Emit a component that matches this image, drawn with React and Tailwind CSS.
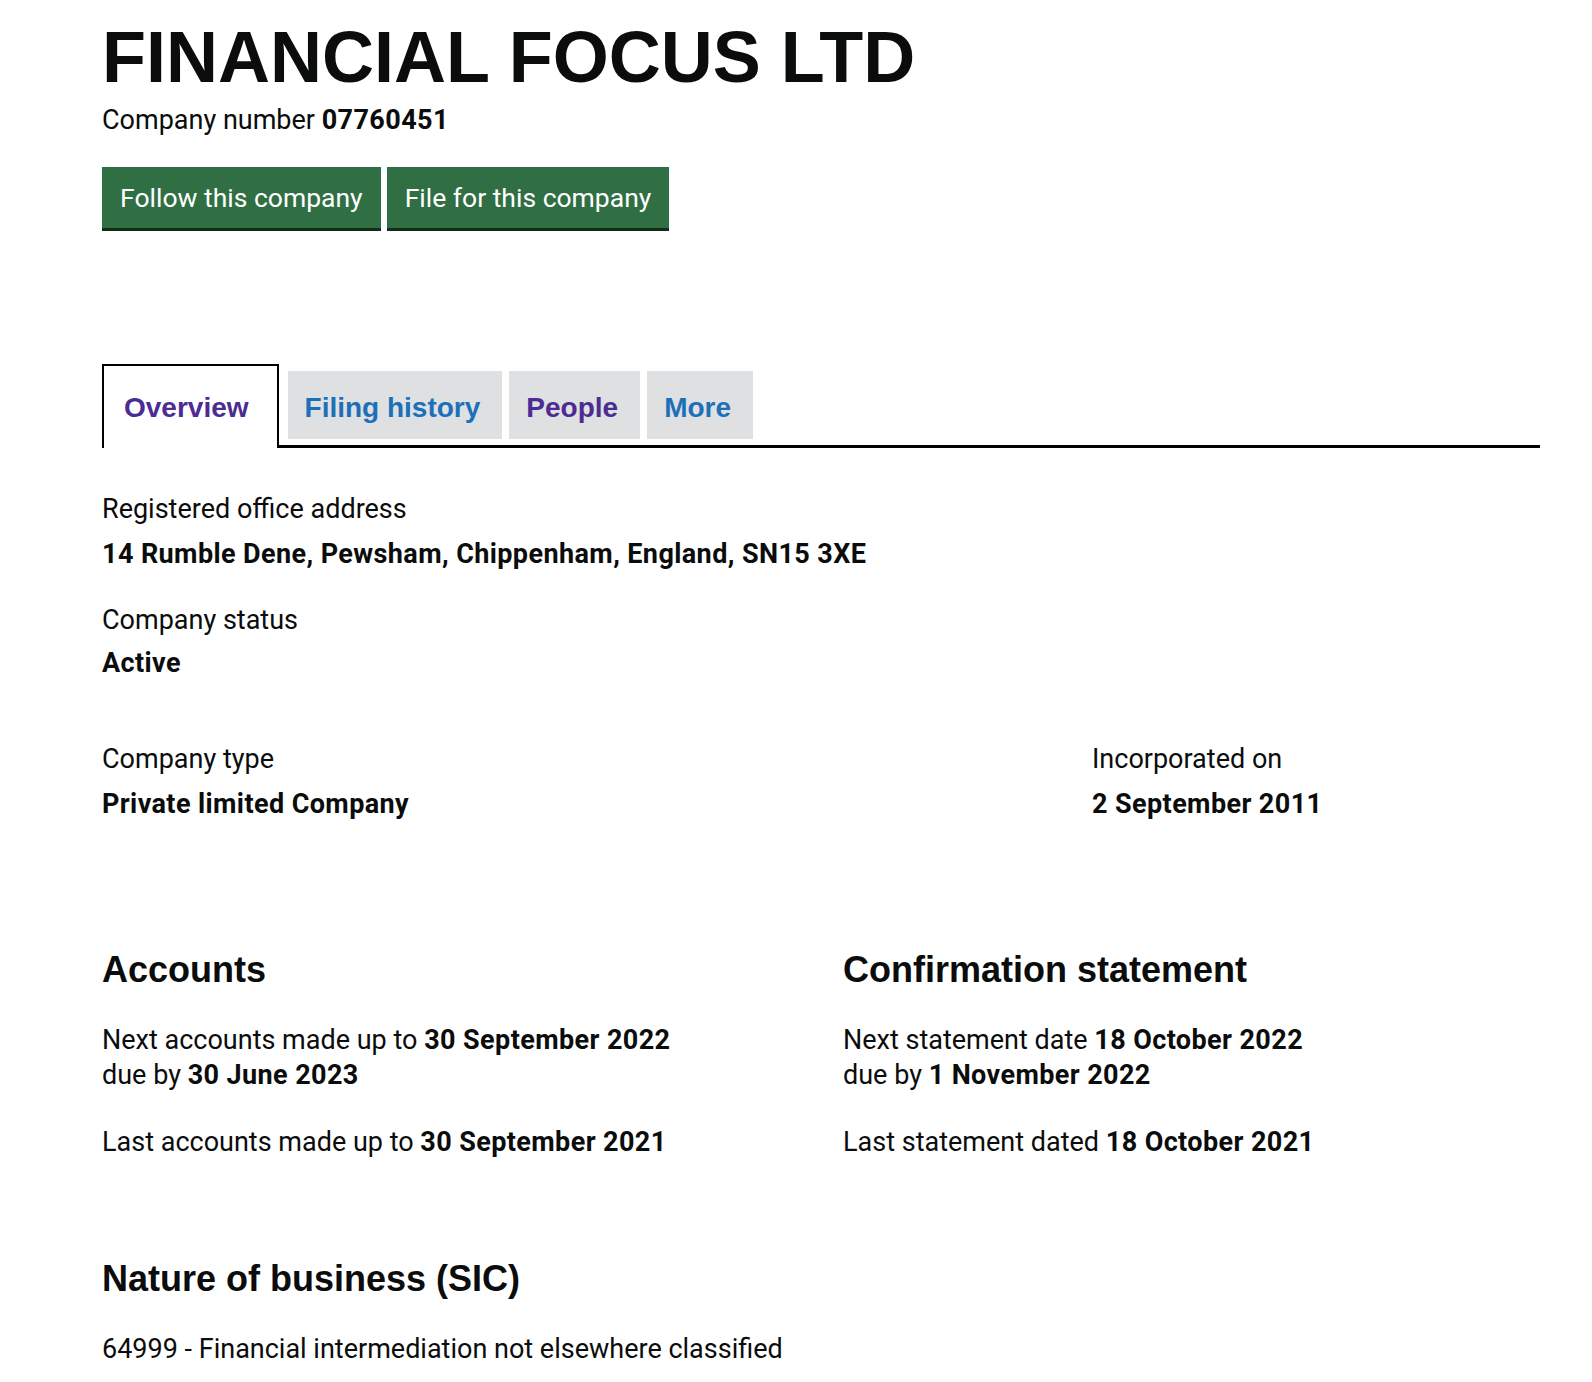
import React from "react";

const body = { fontFamily: "Roboto, 'Liberation Sans', Arial, sans-serif" };
const heading = { fontFamily: "'Liberation Sans', Arial, Helvetica, sans-serif" };

const tabs = [
  { label: "Overview", active: true, color: "text-[#4c2c92]" },
  { label: "Filing history", color: "text-[#1d70b8]" },
  { label: "People", color: "text-[#4c2c92]" },
  { label: "More", color: "text-[#1d70b8]" },
];

const Tabs = () => (
  <div className="flex items-end gap-[7px] border-b-[3px] border-black mt-[136px]" style={heading}>
    {tabs.map((t) =>
      t.active ? (
        <a
          key={t.label}
          href="#"
          className={`block bg-white border-t-2 border-x-2 border-black mb-[-3px] mr-[2px] pl-[20px] pr-[28px] pt-[28px] pb-[26px] text-[28px] leading-none font-bold ${t.color}`}
        >
          {t.label}
        </a>
      ) : (
        <a
          key={t.label}
          href="#"
          className={`block bg-[#dfe0e2] mb-[6px] pl-[17px] pr-[22px] pt-[23px] pb-[17px] text-[28px] leading-none font-bold ${t.color}`}
        >
          {t.label}
        </a>
      )
    )}
  </div>
);

const B = ({ children }) => <strong className="font-bold tracking-[0.4px]">{children}</strong>;

const Field = ({ label, value, className = "" }) => (
  <div className={className}>
    <p>{label}</p>
    <p className="font-bold tracking-[0.4px] mt-[9px]">{value}</p>
  </div>
);

const GreenButton = ({ children }) => (
  <button className="h-[61px] px-[18px] bg-[#306f44] text-white text-[26.5px] shadow-[0_3px_0_#0f2e18] flex items-center">
    {children}
  </button>
);

export default function App() {
  return (
    <div className="min-h-[1382px] bg-white text-[#0b0c0c] pl-[102px] pr-[52px] text-[27px] leading-[36px]" style={body}>
      <h1 className="pt-[21px] text-[72px] leading-none font-bold" style={heading}>
        FINANCIAL FOCUS LTD
      </h1>
      <p className="mt-[9px]">
        Company number <B>07760451</B>
      </p>

      <div className="flex gap-[6px] mt-[29px]">
        <GreenButton>Follow this company</GreenButton>
        <GreenButton>File for this company</GreenButton>
      </div>

      <Tabs />

      <div className="mt-[43px]">
        <Field label="Registered office address" value="14 Rumble Dene, Pewsham, Chippenham, England, SN15 3XE" />
        <div className="mt-[30px]">
          <p>Company status</p>
          <p className="font-bold tracking-[0.4px] mt-[7px]">Active</p>
        </div>
        <div className="grid grid-cols-[990px_1fr] mt-[60px]">
          <Field label="Company type" value="Private limited Company" />
          <Field label="Incorporated on" value="2 September 2011" />
        </div>
      </div>

      <div className="grid grid-cols-[741px_1fr] mt-[130px]">
        <div>
          <h2 className="text-[36px] leading-none font-bold" style={heading}>Accounts</h2>
          <p className="mt-[35px] leading-[35px]">
            Next accounts made up to <B>30 September 2022</B>
            <br />
            due by <B>30 June 2023</B>
          </p>
          <p className="mt-[31px]">
            Last accounts made up to <B>30 September 2021</B>
          </p>
        </div>
        <div>
          <h2 className="text-[36px] leading-none font-bold" style={heading}>Confirmation statement</h2>
          <p className="mt-[35px] leading-[35px]">
            Next statement date <B>18 October 2022</B>
            <br />
            due by <B>1 November 2022</B>
          </p>
          <p className="mt-[31px]">
            Last statement dated <B>18 October 2021</B>
          </p>
        </div>
      </div>

      <h2 className="mt-[101px] text-[36px] leading-none font-bold" style={heading}>
        Nature of business (SIC)
      </h2>
      <p className="mt-[34px]">64999 - Financial intermediation not elsewhere classified</p>
    </div>
  );
}
